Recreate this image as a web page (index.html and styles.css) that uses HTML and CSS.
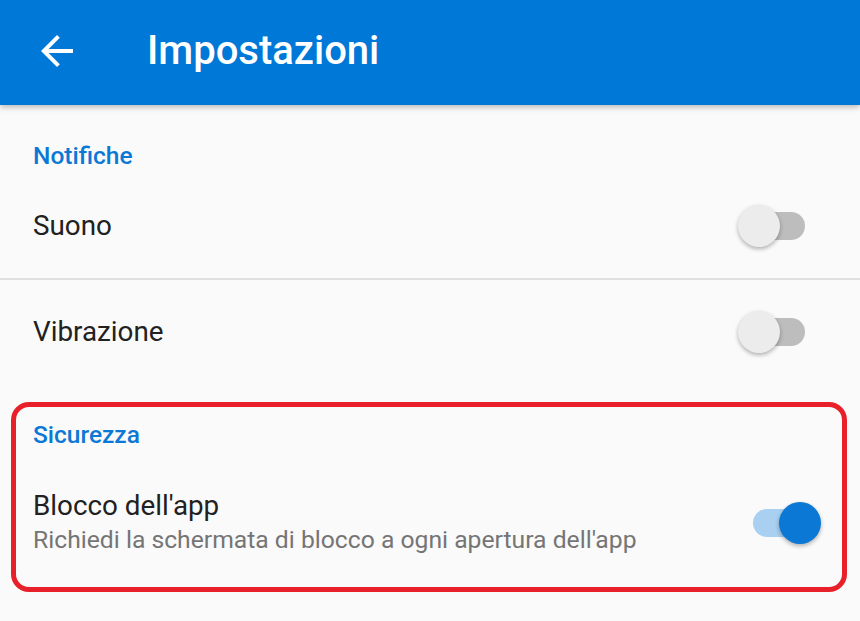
FILE: index.html
```html
<!DOCTYPE html>
<html lang="it">
<head>
    <meta charset="UTF-8">
    <title>Impostazioni</title>
    <link rel="stylesheet" href="styles.css">
</head>
<body>
    <header class="app-bar">
        <button class="back-btn" aria-label="Indietro">
            <svg viewBox="0 0 24 24" width="48" height="48">
                <path fill="#fff" d="M20 11H7.83l5.59-5.59L12 4l-8 8 8 8 1.41-1.41L7.83 13H20v-2z"/>
            </svg>
        </button>
        <h1 class="app-title">Impostazioni</h1>
    </header>

    <main>
        <section class="group">
            <h2 class="group-title">Notifiche</h2>
            <div class="row">
                <span class="row-label">Suono</span>
                <span class="toggle"><span class="track"></span><span class="thumb"></span></span>
            </div>
            <div class="divider"></div>
            <div class="row">
                <span class="row-label">Vibrazione</span>
                <span class="toggle"><span class="track"></span><span class="thumb"></span></span>
            </div>
        </section>

        <section class="group highlighted">
            <h2 class="group-title">Sicurezza</h2>
            <div class="row row-tall">
                <div class="row-text">
                    <div class="row-label">Blocco dell'app</div>
                    <div class="row-sub">Richiedi la schermata di blocco a ogni apertura dell'app</div>
                </div>
                <span class="toggle on"><span class="track"></span><span class="thumb"></span></span>
            </div>
        </section>
    </main>
</body>
</html>
```

FILE: styles.css
```css
body {
    margin: 0;
    background-color: #FAFAFA;
    font-family: 'Roboto', 'Noto Sans', sans-serif;
    color: #212121;
    overflow: hidden;
}

.app-bar {
    height: 105px;
    background-color: #0078D7;
    display: flex;
    align-items: center;
    padding: 0 0 3px 33px;
    box-sizing: border-box;
    box-shadow: 0 2px 6px rgba(0,0,0,0.28);
    position: relative;
}

.back-btn {
    background: none;
    border: none;
    padding: 0;
    width: 48px;
    height: 48px;
    display: flex;
}

.app-title {
    margin: 0 0 0 66px;
    color: #fff;
    font-size: 40px;
    font-weight: 500;
    line-height: 48px;
}

.group-title {
    margin: 37px 0 4px 33px;
    font-size: 24.5px;
    font-weight: 500;
    line-height: 28px;
    color: #0A78D4;
}

.row {
    height: 104px;
    display: flex;
    align-items: center;
    justify-content: space-between;
    padding: 0 39px 0 33px;
}

.row-label {
    font-size: 27.8px;
    line-height: 32px;
}

.divider {
    height: 2px;
    background-color: #E0E0E0;
}

.highlighted {
    margin: 18px 13px 0 11px;
    border: 5px solid #E8202A;
    border-radius: 18px;
}

.highlighted .group-title {
    margin: 14px 0 0 17px;
}

.highlighted .row {
    padding: 0 21px 0 17px;
}

.row-tall {
    height: auto;
    padding-top: 41px !important;
    padding-bottom: 32px !important;
}

.row-sub {
    margin-top: 3px;
    font-size: 24.7px;
    line-height: 30px;
    color: #757575;
}

/* interruttore */
.toggle {
    position: relative;
    width: 83px;
    height: 42px;
    flex-shrink: 0;
}

.track {
    position: absolute;
    left: 15px;
    top: 7px;
    width: 52px;
    height: 28px;
    border-radius: 14px;
    background-color: #BDBDBD;
}

.thumb {
    position: absolute;
    left: 0;
    top: 0;
    width: 42px;
    height: 42px;
    border-radius: 50%;
    background-color: #ECECEC;
    box-shadow: 0 2px 4px rgba(0,0,0,0.3);
}

.toggle.on .track {
    background-color: #A9D0F1;
}

.toggle.on .thumb {
    left: auto;
    right: 0;
    background-color: #0A78D4;
}
```
